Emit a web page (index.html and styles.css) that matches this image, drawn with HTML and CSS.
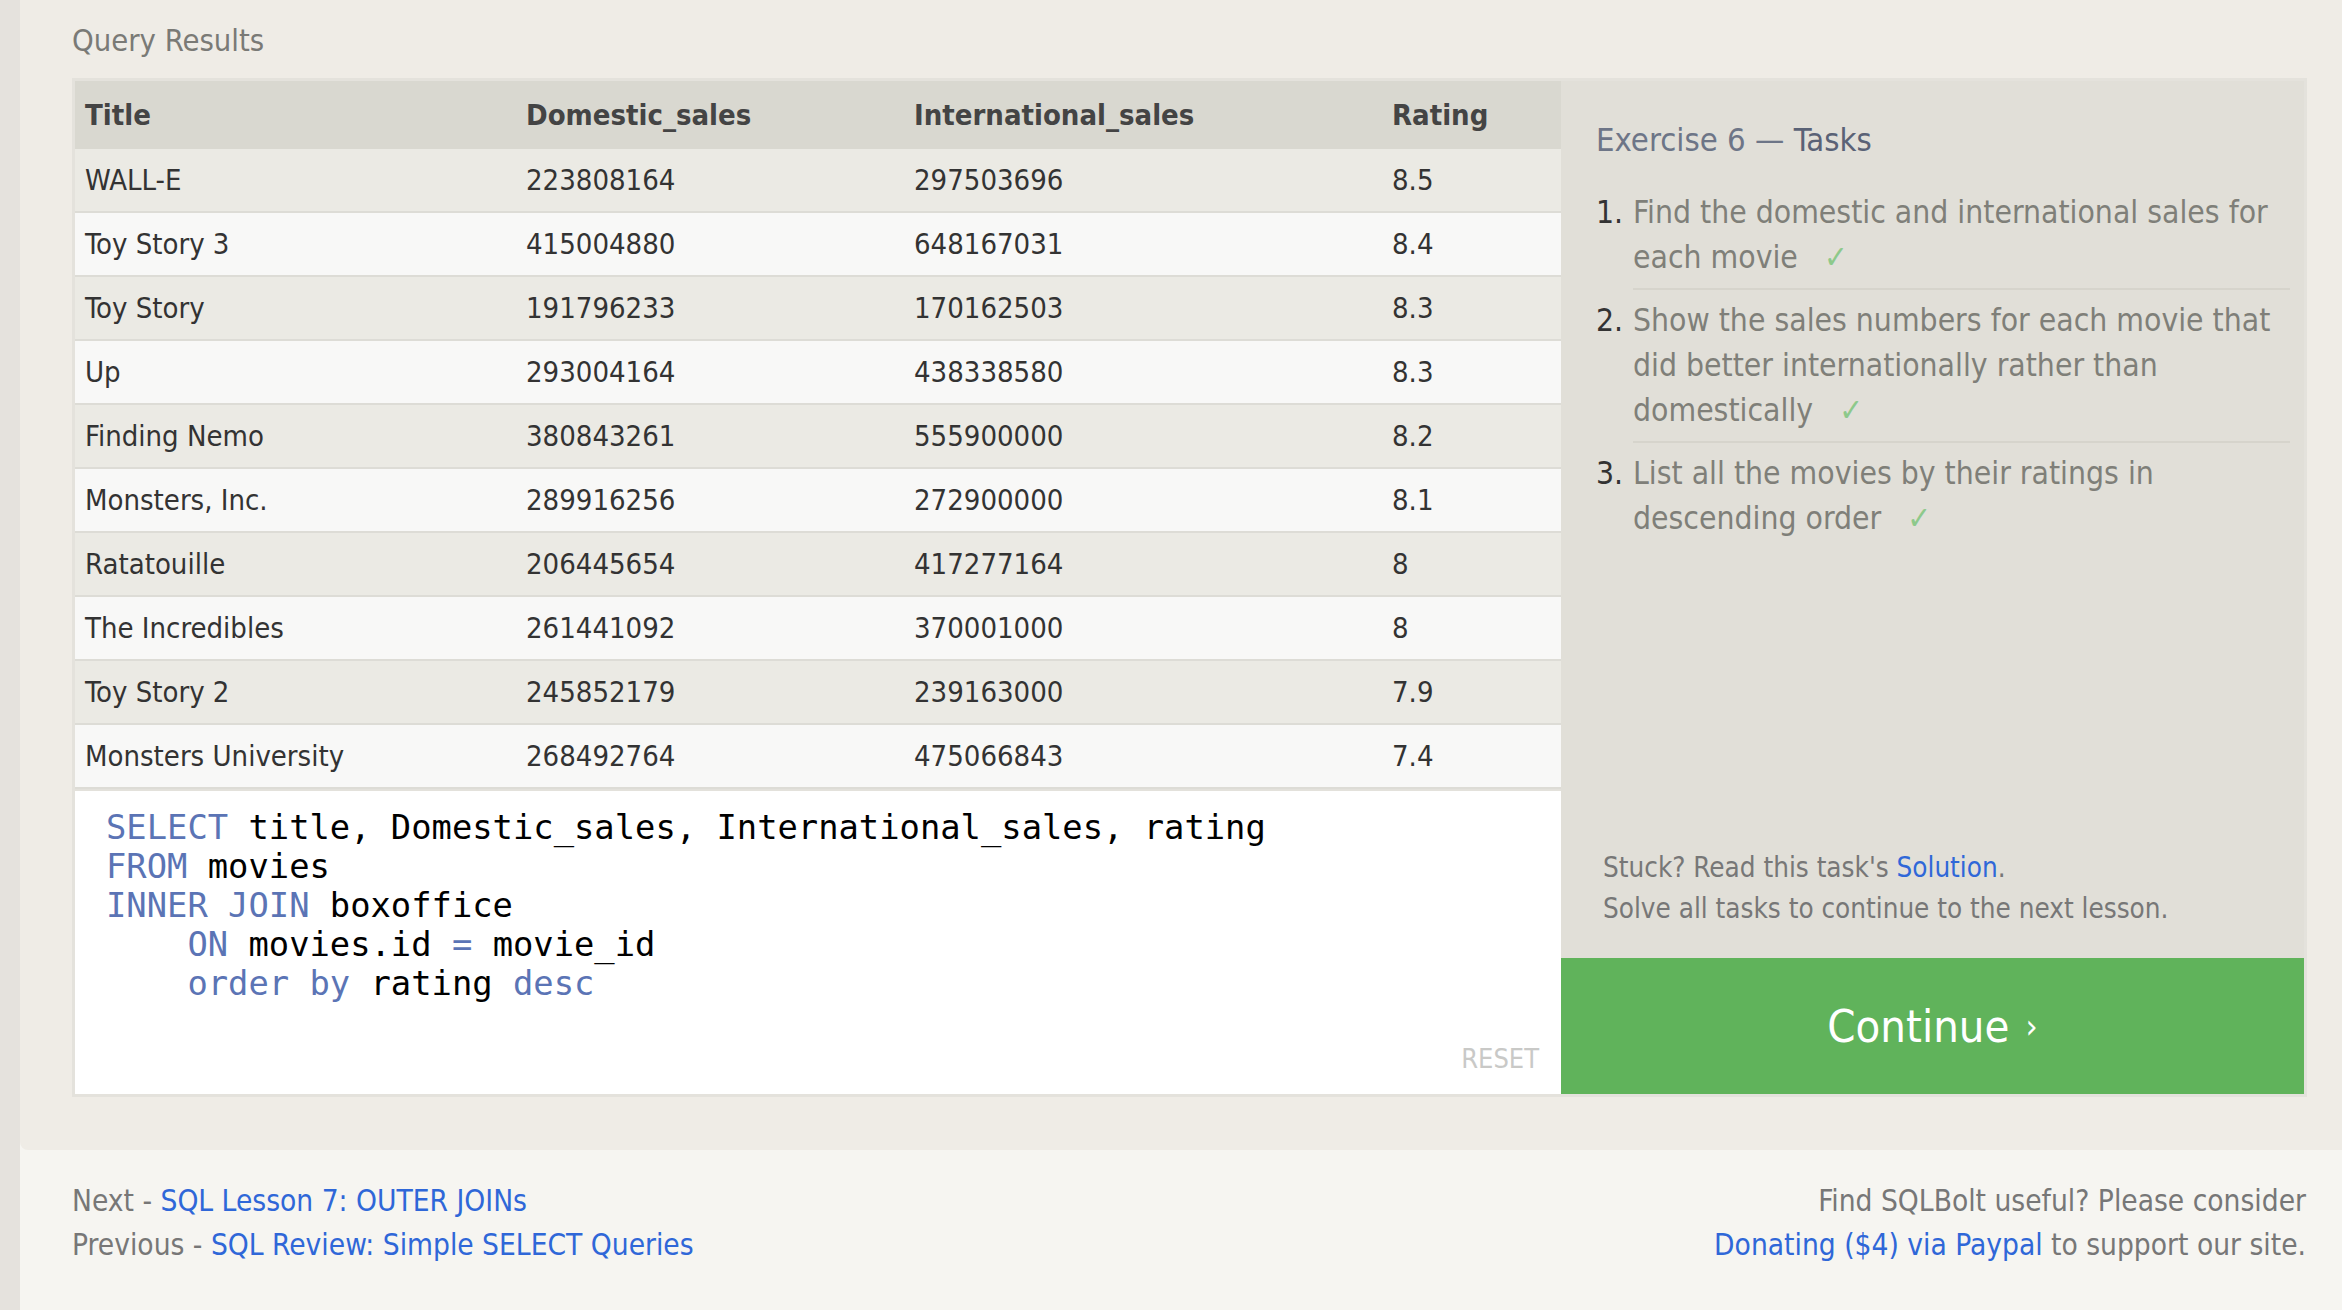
FILE: index.html
```html
<!DOCTYPE html>
<html lang="en">
<head>
<meta charset="utf-8">
<title>SQLBolt - Exercise 6</title>
<link rel="stylesheet" href="styles.css">
</head>
<body>
  <div class="strip"></div>
  <div class="page">
    <main class="content">
      <h2 class="section-title">Query Results</h2>
      <div class="exercise">
        <div class="work">
          <table class="results">
            <colgroup>
              <col class="c1"><col class="c2"><col class="c3"><col class="c4">
            </colgroup>
            <thead>
              <tr><th>Title</th><th>Domestic_sales</th><th>International_sales</th><th>Rating</th></tr>
            </thead>
            <tbody>
              <tr><td>WALL-E</td><td>223808164</td><td>297503696</td><td>8.5</td></tr>
              <tr><td>Toy Story 3</td><td>415004880</td><td>648167031</td><td>8.4</td></tr>
              <tr><td>Toy Story</td><td>191796233</td><td>170162503</td><td>8.3</td></tr>
              <tr><td>Up</td><td>293004164</td><td>438338580</td><td>8.3</td></tr>
              <tr><td>Finding Nemo</td><td>380843261</td><td>555900000</td><td>8.2</td></tr>
              <tr><td>Monsters, Inc.</td><td>289916256</td><td>272900000</td><td>8.1</td></tr>
              <tr><td>Ratatouille</td><td>206445654</td><td>417277164</td><td>8</td></tr>
              <tr><td>The Incredibles</td><td>261441092</td><td>370001000</td><td>8</td></tr>
              <tr><td>Toy Story 2</td><td>245852179</td><td>239163000</td><td>7.9</td></tr>
              <tr><td>Monsters University</td><td>268492764</td><td>475066843</td><td>7.4</td></tr>
            </tbody>
          </table>
          <div class="editor">
<pre class="code"><span class="kw">SELECT</span> title, Domestic_sales, International_sales, rating
<span class="kw">FROM</span> movies
<span class="kw">INNER JOIN</span> boxoffice
    <span class="kw">ON</span> movies.id <span class="kw">=</span> movie_id
    <span class="kw">order by</span> rating <span class="kw">desc</span></pre>
            <div class="reset-row"><span class="reset">RESET</span></div>
          </div>
        </div>
        <aside class="panel">
          <div class="panel-body">
            <h3 class="panel-title">Exercise 6 — <span class="dark">Tasks</span></h3>
            <ol class="task-list">
              <li><span class="num">1.</span><span class="txt">Find the domestic and international sales for each movie <span class="check">✓</span></span></li>
              <li><span class="num">2.</span><span class="txt">Show the sales numbers for each movie that did better internationally rather than domestically <span class="check">✓</span></span></li>
              <li><span class="num">3.</span><span class="txt">List all the movies by their ratings in descending order <span class="check">✓</span></span></li>
            </ol>
          </div>
          <div class="stuck">
            <div>Stuck? Read this task's <a href="#" class="link">Solution</a>.</div>
            <div>Solve all tasks to continue to the next lesson.</div>
          </div>
          <a href="#" class="continue">Continue <span class="chev">›</span></a>
        </aside>
      </div>
    </main>
    <footer class="footer">
      <div class="nav">
        <div>Next - <a href="#" class="link">SQL Lesson 7: OUTER JOINs</a></div>
        <div>Previous - <a href="#" class="link">SQL Review: Simple SELECT Queries</a></div>
      </div>
      <div class="donate">
        <div>Find SQLBolt useful? Please consider</div>
        <div><a href="#" class="link">Donating ($4) via Paypal</a> to support our site.</div>
      </div>
    </footer>
  </div>
</body>
</html>
```

FILE: styles.css
```css
html, body {
  margin: 0;
  padding: 0;
}

body {
  display: flex;
  min-height: 100vh;
  background: #f6f5f1;
  font-family: "DejaVu Sans Condensed", "DejaVu Sans", sans-serif;
  font-stretch: condensed;
  color: #333;
}

.strip {
  flex: 0 0 20px;
  background: #e5e2dd;
}

.page {
  flex: 1;
  display: flex;
  flex-direction: column;
}

.content {
  background: #efece6;
  border-bottom-left-radius: 8px;
  padding: 21px 35px 53px 52px;
}

.section-title {
  margin: 0 0 17px 0;
  font-size: 30.7px;
  line-height: 40px;
  font-weight: normal;
  color: #7a7a76;
}

.exercise {
  display: flex;
  border: 3px solid #e4e2dc;
}

.work {
  flex: 0 0 1486px;
  display: flex;
  flex-direction: column;
}

.results {
  width: 100%;
  border-collapse: collapse;
  table-layout: fixed;
  font-size: 29px;
}

.results col.c1 { width: 441px; }
.results col.c2 { width: 388px; }
.results col.c3 { width: 478px; }
.results col.c4 { width: 179px; }

.results th {
  height: 68px;
  padding: 0 10px;
  background: #d9d8d0;
  color: #444;
  text-align: left;
  font-weight: bold;
}

.results td {
  height: 62px;
  padding: 0 10px;
  color: #333;
  border-bottom: 2px solid #dddcd6;
}

.results tbody tr:nth-child(odd) td { background: #ebeae4; }
.results tbody tr:nth-child(even) td { background: #f8f8f7; }

.editor {
  background: #fff;
  border-top: 2px solid #e3e1db;
  height: 305px;
  display: flex;
  flex-direction: column;
  padding: 17px 22px 0 31px;
  box-sizing: border-box;
}

.code {
  margin: 0;
  font-family: "DejaVu Sans Mono", monospace;
  font-size: 33.8px;
  line-height: 39px;
  color: #000;
}

.code .kw { color: #5b74b5; }

.reset-row {
  margin-top: auto;
  display: flex;
  justify-content: flex-end;
  padding-bottom: 17px;
}

.reset {
  font-size: 27px;
  line-height: 36px;
  color: #c9c9c7;
}

.panel {
  flex: 1;
  background: #e1dfd8;
  display: flex;
  flex-direction: column;
}

.panel-body {
  padding: 39px 14px 0 35px;
}

.panel-title {
  margin: 0;
  font-size: 32.6px;
  line-height: 40px;
  font-weight: normal;
  color: #6d7587;
}

.panel-title .dark { color: #5a6276; }

.task-list {
  list-style: none;
  margin: 21.5px 0 0 0;
  padding: 0;
  font-size: 31.6px;
  line-height: 45px;
}

.task-list li {
  display: grid;
  grid-template-columns: 37px 1fr;
}

.task-list .num {
  padding-top: 8px;
  color: #333;
}

.task-list .txt {
  padding: 8px 0;
  color: #7f7f79;
}

.task-list li:not(:last-child) .txt {
  border-bottom: 2px solid #d6d4cc;
}

.check {
  margin-left: 17px;
  color: #8dc98b;
}

.stuck {
  margin-top: auto;
  padding: 0 14px 29px 42px;
  font-size: 27.6px;
  line-height: 41px;
  color: #777;
}

.link {
  color: #2f67d8;
  text-decoration: none;
}

.continue {
  display: flex;
  align-items: center;
  justify-content: center;
  height: 136px;
  background: #60b35b;
  color: #fff;
  font-size: 45px;
  text-decoration: none;
}

.continue .chev {
  font-size: 34px;
  margin-left: 16px;
}

.footer {
  display: flex;
  justify-content: space-between;
  padding: 28.5px 36px 40px 52px;
  font-size: 29.6px;
  line-height: 44px;
  color: #777;
}

.donate {
  text-align: right;
}
```
